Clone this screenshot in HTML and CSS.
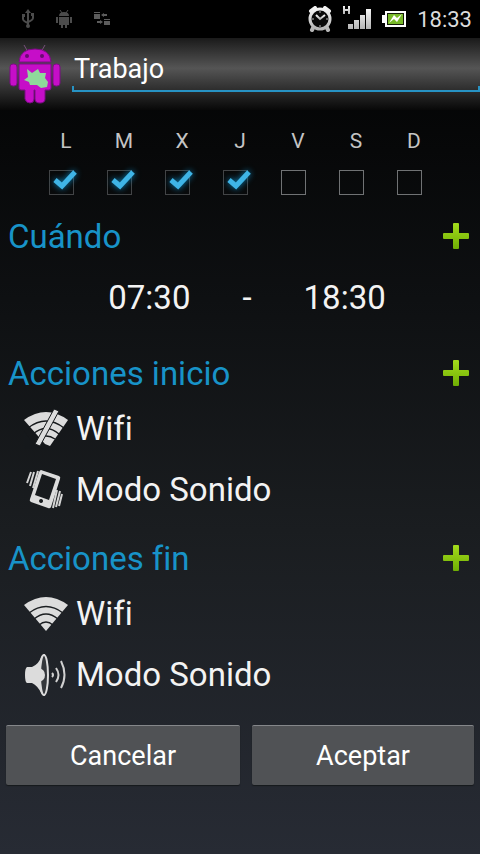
FILE: index.html
```html
<!DOCTYPE html>
<html lang="es">
<head>
    <meta charset="utf-8"/>
    <meta name="viewport" content="width=device-width,initial-scale=1">
    <title>Trabajo</title>
    <link rel="stylesheet" href="styles.css">
</head>
<body>
<!-- shared icons -->
<svg class="defs" aria-hidden="true">
    <defs>
        <linearGradient id="green" x1="0" y1="0" x2="0" y2="1">
            <stop offset="0" stop-color="#a4dc1c"/>
            <stop offset="1" stop-color="#6fae04"/>
        </linearGradient>
        <linearGradient id="silver" x1="0" y1="0" x2="0" y2="1">
            <stop offset="0" stop-color="#f4f4f4"/>
            <stop offset="1" stop-color="#b4b4b4"/>
        </linearGradient>
    </defs>
    <symbol id="plus" viewBox="0 0 26 26">
        <path fill="url(#green)" d="M11 0h4q1 0 1 1v9h9q1 0 1 1v4q0 1-1 1h-9v9q0 1-1 1h-4q-1 0-1-1v-9H1q-1 0-1-1v-4q0-1 1-1h9V1q0-1 1-1z"/>
    </symbol>
    <symbol id="tick" viewBox="0 0 30 28">
        <path fill="none" stroke="#3fb4e6" stroke-width="5" d="M6 12l7 6L26 4"/>
    </symbol>
    <symbol id="wifi" viewBox="0 0 44 36">
        <path fill="#dcdcdc" d="M0 9Q22-7 44 9L22 35z"/>
        <path fill="none" stroke="#1b1e21" stroke-width="1.4" d="M5 17Q22 4 39 17M10 23Q22 13 34 23M15 29Q22 23 29 29"/>
    </symbol>
</svg>
<div class="status">
    <svg class="left-icon" width="12" height="20" viewBox="0 0 12 20" fill="none" stroke="#4c4c4c" stroke-width="2">
        <path d="M6 3v14M1 6v4q0 2 5 4M11 5v4q0 2-5 4"/>
        <path fill="#4c4c4c" stroke="none" d="M6 0l3 4H3zM0 5h3v3H0zM9 4h3v3H9z"/>
        <circle cx="6" cy="17" r="2" fill="#4c4c4c" stroke="none"/>
    </svg>
    <svg class="left-icon" width="16" height="18" viewBox="0 0 16 18" fill="#4c4c4c">
        <path d="M3 6q0-4 5-4t5 4zM3 7h10v8h-2v3H9v-3H7v3H5v-3H3zM0 7h2v6H0zM14 7h2v6h-2z"/>
        <path stroke="#4c4c4c" d="M4 0l2 3M12 0l-2 3"/>
    </svg>
    <svg class="left-icon" width="16" height="14" viewBox="0 0 16 14" fill="#5c5c5c">
        <path d="M0 0h6v1H0zM0 2h6v5H0zM10 7h6v1h-6zM10 9h6v4h-6zM7 3l3-2v1h3v2h-3v1zM9 10l-3-2v1H3v2h3v1z"/>
    </svg>
    <span class="spacer"></span>
    <svg width="24" height="26" viewBox="0 0 24 26" fill="none" stroke="url(#silver)">
        <path stroke-width="4" stroke-linecap="round" d="M3 5l4-3M21 5l-4-3M5 22l-1 2M19 22l1 2"/>
        <circle cx="12" cy="13" r="10" stroke-width="3" fill="#090909"/>
        <path stroke-width="2" d="M8 9l4 4 5-4"/>
        <path stroke="#bbb" d="M12 5v2M12 19v2M4 13h2M18 13h2"/>
    </svg>
    <svg class="signal" width="28" height="25" viewBox="0 0 28 25" fill="url(#silver)">
        <path d="M0 0h2v3h3V0h2v8H5V5H2v3H0z"/>
        <path d="M5 18h5v5H5zM11 14h5v9h-5zM17 9h5v14h-5zM23 3h5v20h-5z"/>
    </svg>
    <svg width="24" height="16" viewBox="0 0 24 16">
        <path fill="#fff" d="M3 0h21v16H3v-4H0V4h3z"/>
        <path fill="#141c08" d="M5 2h17v12H5z"/>
        <path fill="#78b928" d="M6 3h15v10H6z"/>
        <path fill="#fff" d="M7 12l5-8 3 3 5-4-5 8-3-3z"/>
    </svg>
    <span class="clock">18:33</span>
</div>
<form>
    <div class="header">
        <svg class="robot" width="52" height="60" viewBox="0 0 52 60" fill="#c60ec8" stroke="#7d0a85">
            <path fill="none" stroke="#77507a" d="M15 1l4 7M36 1l-4 7"/>
            <path d="M10 18Q11 5 26 5t16 13z"/>
            <path d="M10 20h32v24q0 2-2 2h-4v9q0 4-5 4t-5-4v-9h-1v9q0 4-4 4t-5-4v-9h-4q-2 0-2-2z"/>
            <rect x="1" y="20" width="7" height="22" rx="3"/>
            <rect x="44" y="20" width="7" height="22" rx="3"/>
            <g stroke="none">
                <circle cx="18" cy="12" r="2" fill="#6a0a72"/>
                <circle cx="33" cy="12" r="2" fill="#6a0a72"/>
                <path fill="#8fd99b" d="M18 25l5 4 6-4 2 4h6l-1 5 3 4-1 5-6 1-4-3h-7l-1-3-5-2 4-3z"/>
            </g>
        </svg>
        <input class="title" type="text" value="Trabajo" aria-label="Nombre">
    </div>
    <div class="days">
        <label class="day">L<span class="box"><input type="checkbox" checked><svg><use href="#tick"/></svg></span></label>
        <label class="day">M<span class="box"><input type="checkbox" checked><svg><use href="#tick"/></svg></span></label>
        <label class="day">X<span class="box"><input type="checkbox" checked><svg><use href="#tick"/></svg></span></label>
        <label class="day">J<span class="box"><input type="checkbox" checked><svg><use href="#tick"/></svg></span></label>
        <label class="day">V<span class="box"><input type="checkbox"><svg><use href="#tick"/></svg></span></label>
        <label class="day">S<span class="box"><input type="checkbox"><svg><use href="#tick"/></svg></span></label>
        <label class="day">D<span class="box"><input type="checkbox"><svg><use href="#tick"/></svg></span></label>
    </div>
    <section>
        <div class="heading">
            <h2>Cuándo</h2>
            <button class="add" type="button" aria-label="Añadir"><svg><use href="#plus"/></svg></button>
        </div>
        <div class="times"><span>07:30</span><span>-</span><span>18:30</span></div>
    </section>
    <section>
        <div class="heading">
            <h2>Acciones inicio</h2>
            <button class="add" type="button" aria-label="Añadir"><svg><use href="#plus"/></svg></button>
        </div>
        <div class="action">
            <svg width="44" height="40" viewBox="0 0 44 40">
                <path fill="#dcdcdc" d="M0 11Q22-5 44 11L26 37l-5-2z"/>
                <path fill="none" stroke="#15181b" stroke-width="1.4" d="M4 19Q22 5 40 19M9 25Q22 14 35 25M14 30Q22 24 31 30"/>
                <path fill="#15181b" d="M0 22l10 14 10 4H0z"/>
                <path fill="#dcdcdc" stroke="#15181b" d="M30 0l5 2-19 35-5-2z"/>
            </svg>
            <span>Wifi</span>
        </div>
        <div class="action">
            <svg width="44" height="40" viewBox="0 0 44 40">
                <path fill="#dcdcdc" fill-rule="evenodd" d="M17 0l18 6q2 1 1 3l-9 28q-1 2-3 1L7 32q-2-1-1-3l9-27q1-2 2-2zM18 4l-7 21 14 5 7-21zM17 29a2 2 0 1 0 .1 0z"/>
                <path fill="none" stroke="#d4d4d4" stroke-width="2" d="M7 2L3 13M10 2L6 16M14 1L9 18M33 20l-4 18M36 21l-4 16M38 24l-3 12"/>
            </svg>
            <span>Modo Sonido</span>
        </div>
    </section>
    <section>
        <div class="heading">
            <h2>Acciones fin</h2>
            <button class="add" type="button" aria-label="Añadir"><svg><use href="#plus"/></svg></button>
        </div>
        <div class="action">
            <svg width="44" height="36"><use href="#wifi"/></svg>
            <span>Wifi</span>
        </div>
        <div class="action">
            <svg width="44" height="42" viewBox="0 0 44 42">
                <path fill="#dcdcdc" d="M3 13h5Q15 10 17 3q1-3 4-3v42q-3 0-4-3-3-7-9-10H3q-2-1-2-8t2-8z"/>
                <ellipse cx="20" cy="21" rx="4" ry="20" fill="#34373b" stroke="#dcdcdc" stroke-width="2"/>
                <path fill="#dcdcdc" d="M14 14q7 1 7 7t-7 7z"/>
                <path fill="none" stroke="#d0d0d0" stroke-width="2" d="M28 19q2 2 0 4M32 14q5 7 0 14M37 7q7 14 0 27"/>
            </svg>
            <span>Modo Sonido</span>
        </div>
    </section>
    <div class="buttons">
        <button type="button">Cancelar</button>
        <button type="button">Aceptar</button>
    </div>
</form>
</body>
</html>
```
FILE: styles.css
```css
*{box-sizing:border-box;}
html{min-height:100%;background:linear-gradient(#000,#0e1012 35%,#1a1d20 62%,#272b34);}
body{margin:0;font-family:Roboto,"Liberation Sans",sans-serif;font-variant-ligatures:none;color:#f3f3f3;font-size:33px;}
button,input{font-family:inherit;color:inherit;margin:0;}
.defs{position:absolute;width:0;height:0;}
.status{display:flex;align-items:center;height:38px;padding:0 8px 0 22px;background:#000;font-size:22px;}
.left-icon{margin-right:22px;}
.spacer{flex:1;}
.signal{margin:6px 11px 0;align-self:flex-start;}
.clock{margin-left:11px;color:#dcdcdc;}
.header{display:flex;align-items:flex-start;height:72px;padding:6px 0 0 9px;background:linear-gradient(#1a1a1a,#555 42%,#303030 70%,#080808);}
.title{flex:1;min-width:0;height:48px;margin-left:11px;padding:2px 2px 0;font-size:27px;color:#fff;border:0;outline:0;
    background:linear-gradient(#2793c4,#2793c4) left bottom/100% 2px no-repeat,linear-gradient(#2793c4,#2793c4) left bottom/2px 6px no-repeat,linear-gradient(#2793c4,#2793c4) right bottom/2px 6px no-repeat;}
.days{display:grid;grid-template-columns:repeat(7,1fr);padding:19px 37px 16px;}
.day{text-align:center;font-size:21px;line-height:24px;color:#c4c4c4;}
.box{display:block;position:relative;width:25px;height:25px;margin:17px 0 0 12px;}
.box input{display:block;appearance:none;-webkit-appearance:none;width:25px;height:25px;border:1px solid #707274;}
.box input:checked{border-color:#424446;}
.box svg{display:none;position:absolute;left:0;top:-2px;width:30px;height:28px;overflow:visible;filter:drop-shadow(0 0 3px #0a82b8);pointer-events:none;}
.box input:checked + svg{display:block;}
section{margin-bottom:13px;}
.heading{display:flex;justify-content:space-between;align-items:center;height:50px;padding:0 11px 0 8px;}
h2{margin:0;font-size:33px;font-weight:400;color:#1893c8;}
.add{display:flex;padding:0;border:0;background:none;}
.add svg{width:26px;height:26px;}
.times{display:flex;justify-content:center;gap:52px;padding-left:14px;line-height:74px;}
.action{display:flex;align-items:center;gap:8px;height:61px;padding-left:24px;}
.buttons{display:flex;gap:12px;padding:7px 6px;}
.buttons button{flex:1 1 auto;height:60px;padding:0;font-size:27px;color:#fff;background:#505255;border:0;border-top:1px solid #85878a;border-radius:2px;box-shadow:0 1px 1px #16191c;}
```
